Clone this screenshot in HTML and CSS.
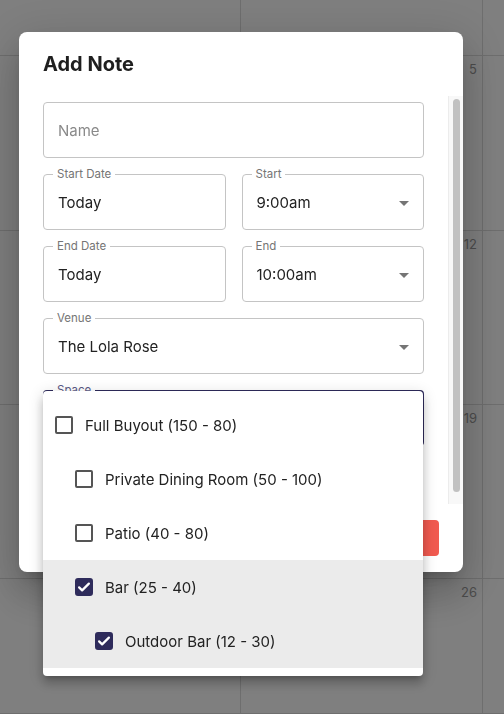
FILE: index.html
```html
<!DOCTYPE html>
<html lang="en">
<head>
<meta charset="utf-8">
<title>Add Note</title>
<link rel="stylesheet" href="styles.css">
</head>
<body>
<div class="calendar">
  <div class="cell"></div><div class="cell"></div><div class="cell"></div>
  <div class="cell"><span class="day">4</span></div><div class="cell"><span class="day">5</span></div><div class="cell"></div>
  <div class="cell"><span class="day">11</span></div><div class="cell"><span class="day">12</span></div><div class="cell"></div>
  <div class="cell"><span class="day">18</span></div><div class="cell"><span class="day">19</span></div><div class="cell"></div>
  <div class="cell"><span class="day">25</span></div><div class="cell"><span class="day">26</span></div><div class="cell"></div>
</div>

<div class="backdrop"></div>

<div class="dialog" role="dialog">
  <h2 class="dialog-title">Add Note</h2>
  <div class="dialog-body">
    <div class="dialog-content">
      <div class="field">
        <span class="placeholder">Name</span>
      </div>
      <div class="row">
        <div class="field">
          <span class="label">Start Date</span>
          <span class="value">Today</span>
        </div>
        <div class="field select">
          <span class="label">Start</span>
          <span class="value">9:00am</span>
          <svg class="arrow" viewBox="0 0 24 24"><path d="M7 10l5 5 5-5z"/></svg>
        </div>
      </div>
      <div class="row">
        <div class="field">
          <span class="label">End Date</span>
          <span class="value">Today</span>
        </div>
        <div class="field select">
          <span class="label">End</span>
          <span class="value">10:00am</span>
          <svg class="arrow" viewBox="0 0 24 24"><path d="M7 10l5 5 5-5z"/></svg>
        </div>
      </div>
      <div class="field select">
        <span class="label">Venue</span>
        <span class="value">The Lola Rose</span>
        <svg class="arrow" viewBox="0 0 24 24"><path d="M7 10l5 5 5-5z"/></svg>
      </div>
      <div class="field select focused">
        <span class="label">Space</span>
      </div>
    </div>
    <div class="scrollbar"><div class="thumb"></div></div>
  </div>
  <div class="dialog-actions">
    <button class="btn btn-primary">Save</button>
  </div>
</div>

<ul class="menu" role="listbox">
  <li class="item"><span class="check"></span><span class="item-text">Full Buyout (150 - 80)</span></li>
  <li class="item level-1"><span class="check"></span><span class="item-text">Private Dining Room (50 - 100)</span></li>
  <li class="item level-1"><span class="check"></span><span class="item-text">Patio (40 - 80)</span></li>
  <li class="item level-1 selected"><span class="check checked"><svg viewBox="0 0 24 24"><path d="M5.5 12.5l4 4 9-9" /></svg></span><span class="item-text">Bar (25 - 40)</span></li>
  <li class="item level-2 selected"><span class="check checked"><svg viewBox="0 0 24 24"><path d="M5.5 12.5l4 4 9-9" /></svg></span><span class="item-text">Outdoor Bar (12 - 30)</span></li>
</ul>
</body>
</html>
```
FILE: styles.css
```css
* { box-sizing: border-box; }

html, body {
  margin: 0;
  padding: 0;
  width: 504px;
  height: 714px;
  overflow: hidden;
  background: #ffffff;
  font-family: "Inter", "Liberation Sans", sans-serif;
  color: #222222;
}

.calendar {
  display: grid;
  grid-template-columns: 241px 242px 21px;
  grid-template-rows: 56px 175px 174px 174px 135px;
  width: 504px;
  height: 714px;
}

.cell {
  border-right: 1px solid #dcdcdc;
  border-bottom: 1px solid #dcdcdc;
  display: flex;
  justify-content: flex-end;
  align-items: flex-start;
  padding: 5px 5px 0 0;
}

.cell:nth-child(3n) { border-right: none; }

.day {
  font-size: 13px;
  line-height: 16px;
  color: #9a9a9a;
}

.backdrop {
  position: fixed;
  inset: 0;
  background: rgba(0, 0, 0, 0.5);
}

.dialog {
  position: fixed;
  left: 19px;
  top: 32px;
  width: 444px;
  height: 540px;
  background: #ffffff;
  border-radius: 8px;
  box-shadow: 0 11px 15px -7px rgba(0,0,0,0.2), 0 24px 38px 3px rgba(0,0,0,0.14), 0 9px 46px 8px rgba(0,0,0,0.12);
  display: flex;
  flex-direction: column;
  overflow: hidden;
}

.dialog-title {
  margin: 0;
  padding: 16px 24px;
  font-size: 20px;
  line-height: 32px;
  font-weight: 700;
  color: #1f1f1f;
}

.dialog-body {
  height: 408px;
  display: flex;
}

.dialog-content {
  flex: 1;
  overflow: hidden;
  padding: 6px 24px 0 24px;
  display: flex;
  flex-direction: column;
  gap: 16px;
}

.scrollbar {
  width: 15px;
  flex: none;
  background: #f8f8f8;
  border-left: 1px solid #ececec;
  padding: 3px 3px 12px 4px;
}

.thumb {
  height: 100%;
  background: #c1c1c1;
  border-radius: 4px;
}

.row {
  display: grid;
  grid-template-columns: 1fr 1fr;
  gap: 16px;
}

.field {
  position: relative;
  height: 56px;
  flex: none;
  border: 1px solid #c4c4c4;
  border-radius: 4px;
  display: flex;
  align-items: center;
  padding: 0 14px;
  font-size: 15px;
}

.field.focused {
  border: 2px solid #2e2b5b;
  padding: 0 13px;
}

.label {
  position: absolute;
  left: 9px;
  top: -8px;
  padding: 0 4px;
  background: #ffffff;
  font-size: 11.5px;
  line-height: 14px;
  color: #757575;
}

.field.focused .label {
  left: 8px;
  top: -9px;
  color: #5b5a85;
}

.value {
  color: #222222;
}

.placeholder {
  color: #8a8a8a;
}

.arrow {
  position: absolute;
  right: 7px;
  top: 16px;
  width: 24px;
  height: 24px;
  fill: #757575;
}

.dialog-actions {
  height: 68px;
  padding: 16px 24px;
  display: flex;
  justify-content: flex-end;
}

.btn {
  height: 36px;
  border: none;
  border-radius: 4px;
  padding: 0 16px;
  font-family: inherit;
  font-size: 14px;
  font-weight: 600;
}

.btn-primary {
  background: #f15a50;
  color: #ffffff;
  min-width: 80px;
}

.menu {
  position: fixed;
  left: 43px;
  top: 391px;
  width: 380px;
  margin: 0;
  padding: 7px 0 8px;
  list-style: none;
  background: #ffffff;
  border-radius: 4px;
  box-shadow: 0 5px 5px -3px rgba(0,0,0,0.2), 0 8px 10px 1px rgba(0,0,0,0.14), 0 3px 14px 2px rgba(0,0,0,0.12);
}

.item {
  height: 54px;
  display: flex;
  align-items: center;
  gap: 12px;
  padding-left: 12px;
  font-size: 15px;
  color: #222222;
}

.item.level-1 { padding-left: 32px; }
.item.level-2 { padding-left: 52px; }

.item.selected { background: #ebebeb; }

.check {
  width: 18px;
  height: 18px;
  border: 2px solid #555555;
  border-radius: 2px;
  flex: none;
  display: flex;
  align-items: center;
  justify-content: center;
}

.check.checked {
  background: #2e2b5b;
  border-color: #2e2b5b;
  border-radius: 3px;
}

.check svg {
  width: 18px;
  height: 18px;
  flex: none;
  fill: none;
  stroke: #ffffff;
  stroke-width: 3;
  stroke-linecap: round;
  stroke-linejoin: round;
}
```
